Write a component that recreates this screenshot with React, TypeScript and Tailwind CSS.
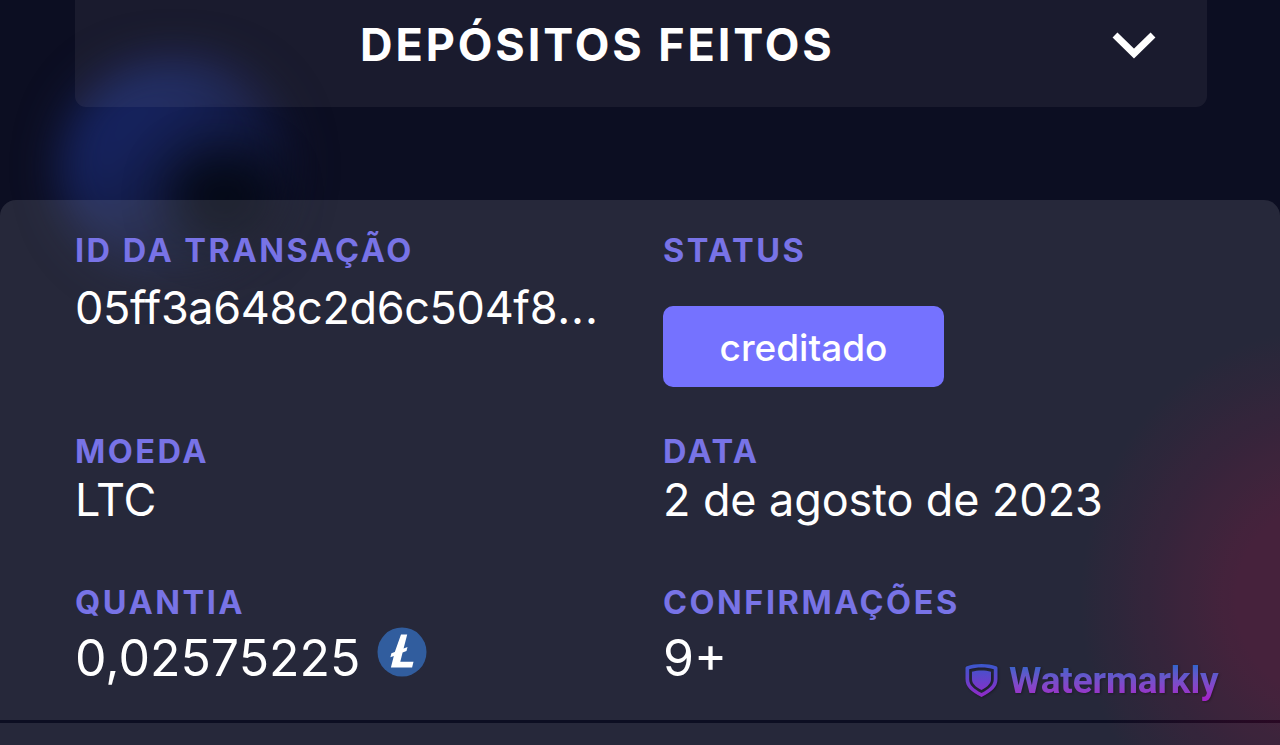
import React from "react";

type FieldProps = {
  label: string;
  children: React.ReactNode;
};

function Field({ label, children }: FieldProps) {
  return (
    <div className="min-w-0">
      <h3 className="text-[32.5px] leading-[30px] font-bold tracking-[2.5px] whitespace-nowrap text-[#7873e6]">
        {label}
      </h3>
      {children}
    </div>
  );
}

function Glow() {
  return (
    <div className="pointer-events-none absolute inset-0 overflow-hidden">
      {/* blue ring */}
      <div className="absolute top-[60px] left-[60px] h-[215px] w-[230px] rounded-full bg-linear-to-br from-[#16235f] from-30% to-[#0c0e22] to-85% blur-[22px]" />
      <div className="absolute top-[155px] left-[170px] h-[85px] w-[105px] rounded-full bg-[#020711] opacity-85 blur-[24px]" />
      {/* red glow */}
      <div className="absolute top-[330px] left-[1080px] h-[540px] w-[480px] bg-[radial-gradient(closest-side,#300724_35%,transparent)]" />
    </div>
  );
}

function LitecoinIcon() {
  return (
    <svg className="-mt-3 size-[50px]" viewBox="0 0 50 50">
      <circle cx="25" cy="25" r="24.5" fill="#315d9e" />
      <path
        d="M24 7.500h6.200l-3.600 14 3.900-1.500-1 4-3.900 1.500-2.300 9.200h13.200l-1.400 5.800H13.900l2.900-11.600-3.400 1.300 1-4 3.400-1.300z"
        fill="#fff"
      />
    </svg>
  );
}

function Watermark() {
  return (
    <div className="absolute top-[659px] left-[965px] flex items-center gap-[11px] drop-shadow-[1px_1px_1px_rgba(0,0,0,0.3)]">
      <svg className="size-[33px]" viewBox="0 0 33 33">
        <defs>
          <linearGradient id="shield" x1="0" y1="0" x2="0" y2="1">
            <stop offset="0" stopColor="#3a58cc" />
            <stop offset="1" stopColor="#9229c8" />
          </linearGradient>
        </defs>
        <path
          d="M16.5 0C22 0 27 .8 31 2.2c1 .4 1.5 1 1.5 2V15c0 8-5.500 12.500-16 18C6 27.500.5 23 .5 15V4.200c0-1 .5-1.600 1.500-2C6 .8 11 0 16.500 0zM16.500 3.500C12 3.500 8 4 4.200 5.200V15c0 6 4 9.600 12.300 14 8.300-4.400 12.300-8 12.300-14V5.200C25 4 21 3.500 16.500 3.500zM16.500 6.500c3.500 0 6.500.3 9.500 1.200V15c0 4.600-3 7.400-9.500 11C10 22.400 7 19.600 7 15V7.700c3-.9 6-1.200 9.500-1.200z"
          fill="url(#shield)"
          fillRule="evenodd"
        />
      </svg>
      <span className="bg-linear-to-b from-[#3364cb] from-15% to-[#a224c8] to-90% bg-clip-text font-[Roboto] text-[37px] leading-[43px] font-bold tracking-[-0.15px] text-transparent">
        Watermarkly
      </span>
    </div>
  );
}

function App() {
  return (
    <main className="relative h-[745px] w-[1280px] overflow-hidden bg-[#0c0e22] font-[Inter,sans-serif] text-white">
      <Glow />

      <div className="relative">
        {/* Header */}
        <div className="mr-[73px] ml-[75px] flex h-[107px] items-start rounded-b-[11px] bg-[#ffeeee]/6">
          <h2 className="ml-[285px] pt-[19px] text-[45px] leading-[52px] font-bold tracking-[2.9px] whitespace-nowrap">
            DEPÓSITOS FEITOS
          </h2>
          <svg
            className="mt-[30px] mr-[50px] ml-auto h-[30px] w-[46px]"
            viewBox="0 0 46 30"
            fill="none"
            stroke="#fff"
            strokeWidth="7"
          >
            <path d="M4 5l19 18.500L42 5" />
          </svg>
        </div>

        {/* Deposit card */}
        <div className="mt-[93px] h-[520px] rounded-t-[16px] bg-white/11 pt-[36px] pl-[75px]">
          <div className="grid grid-cols-[588px_1fr]">
            <Field label="ID DA TRANSAÇÃO">
              <p className="mt-[15px] text-[45px] leading-[54px] tracking-[-0.35px] whitespace-nowrap">
                05ff3a648c2d6c504f8<span className="tracking-[0.9px]">...</span>
              </p>
            </Field>
            <Field label="STATUS">
              <div className="mt-10 flex h-[81px] w-[281px] items-center justify-center rounded-[10px] bg-[#7572ff] pt-[3px] text-[37px] font-medium">
                creditado
              </div>
            </Field>
          </div>
          <div className="mt-[50px] grid grid-cols-[588px_1fr]">
            <Field label="MOEDA">
              <p className="mt-[6px] text-[45px] leading-[54px] tracking-[-0.1px]">LTC</p>
            </Field>
            <Field label="DATA">
              <p className="mt-[6px] text-[45px] leading-[54px] tracking-[-0.1px]">
                2 de agosto de 2023
              </p>
            </Field>
          </div>
          <div className="mt-[61px] grid grid-cols-[588px_1fr]">
            <Field label="QUANTIA">
              <div className="mt-[13px] flex items-center gap-[17px] text-[50px] leading-[54px]">
                <span>0,02575225</span>
                <LitecoinIcon />
              </div>
            </Field>
            <Field label="CONFIRMAÇÕES">
              <p className="mt-[13px] text-[50px] leading-[54px]">9+</p>
            </Field>
          </div>
        </div>

        {/* Next card */}
        <div className="mt-[3px] h-[22px] bg-white/11" />
      </div>

      <Watermark />
    </main>
  );
}

export default App;
